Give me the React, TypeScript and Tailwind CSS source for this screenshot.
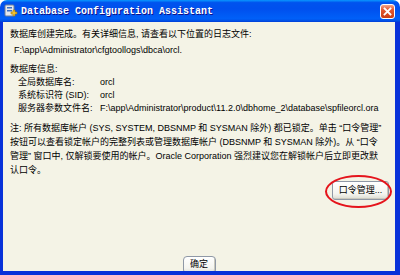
import React from 'react';

const font = { fontFamily: '"Liberation Sans", "Noto Sans CJK SC", sans-serif' };

const AppIcon: React.FC = () => (
  <svg width="14" height="14" viewBox="0 0 14 14">
    <rect x="1" y="1" width="9" height="11" rx="1" fill="#e4e8ee" stroke="#6f7f96" />
    <rect x="3" y="3" width="5" height="1.5" fill="#3a6fc4" />
    <rect x="3" y="6" width="5" height="1.5" fill="#3a6fc4" />
    <path d="M9 6h2v2h2v2h-2v2H9v-2H7V8h2z" fill="#f2c230" stroke="#a07a10" strokeWidth="0.6" />
  </svg>
);

const XpButton: React.FC<{ label: string; className?: string }> = ({ label, className }) => (
  <div
    className={
      'flex items-center justify-center rounded-[3px] border border-[#8f98a6] bg-[linear-gradient(180deg,#ffffff,#f4f4ef_70%,#dcdcd2)] text-[9px] text-black shadow-[inset_-1px_-1px_0_#c9c8bd] ' +
      (className ?? '')
    }
  >
    {label}
  </div>
);

export default function App() {
  return (
    <div className="w-[400px] h-[275px] flex flex-col bg-white overflow-hidden" style={font}>
      {/* title bar */}
      <div className="h-[22px] flex items-center rounded-t-[7px] bg-[linear-gradient(180deg,#0997ff,#0053ee_12%,#0050ee_40%,#0060f8_85%,#0052e8_93%,#003dd7)] pl-[4px] pr-[5px]">
        <AppIcon />
        <span
          className="ml-[3px] text-[10px] font-bold text-white tracking-[0px] [text-shadow:1px_1px_#0f1089]"
          style={{ fontFamily: '"Liberation Mono", monospace' }}
        >
          Database Configuration Assistant
        </span>
        <div className="ml-auto w-[15px] h-[15px] rounded-[3px] border border-white bg-[linear-gradient(180deg,#f3a58c,#e35a32_35%,#c93d14)] flex items-center justify-center">
          <svg width="9" height="9" viewBox="0 0 9 9">
            <path d="M1.5 1.5l6 6M7.5 1.5l-6 6" stroke="#fff" strokeWidth="1.8" strokeLinecap="square" />
          </svg>
        </div>
      </div>

      {/* body */}
      <div className="flex-1 flex flex-col border-l-[3px] border-r-[5px] border-b-[4px] border-[#0831d9] bg-[#f4f3e6] overflow-hidden text-[9px] text-black">
        <div className="pl-[7px] pt-[6px] leading-[13px] whitespace-nowrap">
          <div>数据库创建完成。有关详细信息, 请查看以下位置的日志文件:</div>
          <div className="mt-[3px] pl-[4px]">F:\app\Administrator\cfgtoollogs\dbca\orcl.</div>

          <div className="mt-[6px]">数据库信息:</div>
          <div className="pl-[8px]">
            <div className="flex">
              <span className="w-[82px]">全局数据库名:</span>
              <span>orcl</span>
            </div>
            <div className="flex">
              <span className="w-[82px]">系统标识符 (SID):</span>
              <span>orcl</span>
            </div>
            <div className="flex">
              <span className="w-[82px]">服务器参数文件名:</span>
              <span>F:\app\Administrator\product\11.2.0\dbhome_2\database\spfileorcl.ora</span>
            </div>
          </div>

          <div className="mt-[6px] leading-[14px]">
            <div>注: 所有数据库帐户 (SYS, SYSTEM, DBSNMP 和 SYSMAN 除外) 都已锁定。单击 “口令管理”</div>
            <div>按钮可以查看锁定帐户的完整列表或管理数据库帐户 (DBSNMP 和 SYSMAN 除外)。从 “口令</div>
            <div>管理” 窗口中, 仅解锁要使用的帐户。Oracle Corporation 强烈建议您在解锁帐户后立即更改默</div>
            <div>认口令。</div>
          </div>
        </div>

        <div className="flex justify-end pr-[6px] mt-[4px]">
          <div className="relative">
            <XpButton label="口令管理..." className="w-[57px] h-[19px]" />
            <div className="absolute left-[-7px] top-[-6px] w-[67px] h-[33px] rounded-[50%] border-2 border-[#e5141c]" />
          </div>
        </div>

        <div className="mt-auto mb-[-3px] flex justify-center">
          <XpButton label="确定" className="w-[33px] h-[18px] rounded-[4px]" />
        </div>
      </div>
    </div>
  );
}
